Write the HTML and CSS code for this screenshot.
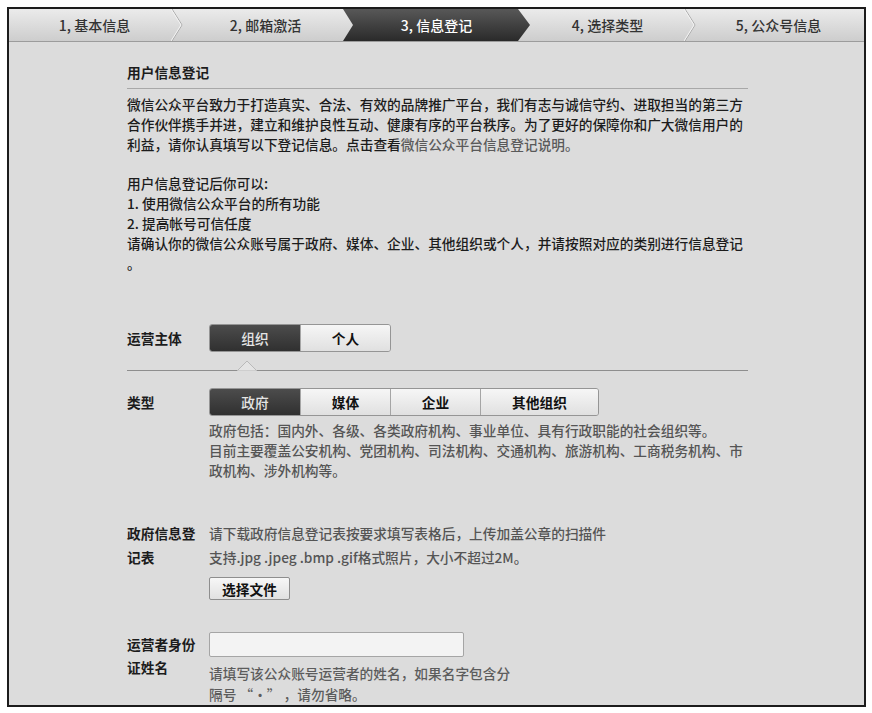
FILE: index.html
```html
<!DOCTYPE html>
<html lang="zh-CN">
<head>
  <meta charset="UTF-8" />
  <title>用户信息登记</title>
  <link rel="stylesheet" href="styles.css">
</head>
<body>
  <div class="frame">
    <ol class="steps">
      <li class="step sep">1, 基本信息
        <svg class="chev" width="12" height="32" viewBox="0 0 12 32"><polyline points="1,0 11,16 1,32" fill="none" stroke="#a9a9a9"/><polyline points="0,0 10,16 0,32" fill="none" stroke="#f4f4f4"/></svg>
      </li>
      <li class="step">2, 邮箱激活</li>
      <li class="step active"><span>3, 信息登记</span></li>
      <li class="step sep">4, 选择类型
        <svg class="chev" width="12" height="32" viewBox="0 0 12 32"><polyline points="1,0 11,16 1,32" fill="none" stroke="#a9a9a9"/><polyline points="0,0 10,16 0,32" fill="none" stroke="#f4f4f4"/></svg>
      </li>
      <li class="step">5, 公众号信息</li>
    </ol>

    <div class="main">
      <h3 class="title">用户信息登记</h3>
      <p class="intro">微信公众平台致力于打造真实、合法、有效的品牌推广平台，我们有志与诚信守约、进取担当的第三方合作伙伴携手并进，建立和维护良性互动、健康有序的平台秩序。为了更好的保障你和广大微信用户的利益，请你认真填写以下登记信息。点击查看<a href="#">微信公众平台信息登记说明。</a></p>
      <p class="intro intro-2">用户信息登记后你可以:<br>1. 使用微信公众平台的所有功能<br>2. 提高帐号可信任度<br>请确认你的微信公众账号属于政府、媒体、企业、其他组织或个人，并请按照对应的类别进行信息登记<br>。</p>

      <div class="row row-subject">
        <div class="label">运营主体</div>
        <div class="seg">
          <button class="on">组织</button>
          <button>个人</button>
        </div>
      </div>

      <div class="divider">
        <svg class="caret" width="20" height="11" viewBox="0 0 20 11"><polygon points="0,11 10,1 20,11" fill="#e4e4e4" stroke="#b9b9b9"/></svg>
      </div>

      <div class="row row-type">
        <div class="label">类型</div>
        <div class="field">
          <div class="seg">
            <button class="on">政府</button>
            <button>媒体</button>
            <button>企业</button>
            <button class="wide">其他组织</button>
          </div>
          <p class="desc">政府包括：国内外、各级、各类政府机构、事业单位、具有行政职能的社会组织等。<br>目前主要覆盖公安机构、党团机构、司法机构、交通机构、旅游机构、工商税务机构、市政机构、涉外机构等。</p>
        </div>
      </div>

      <div class="row row-file">
        <div class="label">政府信息登记表</div>
        <div class="field">
          <p class="tip">请下载政府信息登记表按要求填写表格后，上传加盖公章的扫描件<br>支持.jpg .jpeg .bmp .gif格式照片，大小不超过2M。</p>
          <button class="file-btn">选择文件</button>
        </div>
      </div>

      <div class="row row-name">
        <div class="label">运营者身份证姓名</div>
        <div class="field">
          <input class="text-input" type="text">
          <p class="hint">请填写该公众账号运营者的姓名，如果名字包含分隔号 “·” ，请勿省略。</p>
        </div>
      </div>
    </div>
  </div>
</body>
</html>
```

FILE: styles.css
```css
body {
  margin: 0;
  background: #fff;
  font-family: "Noto Sans CJK SC", sans-serif;
  font-size: 13.7px;
  font-weight: 500;
  color: #1c1c1c;
}

.frame {
  margin: 7px 6px 0 7px;
  height: 696px;
  border: 2px solid #1c1c1c;
  background: #dcdcdc;
  overflow: hidden;
}

/* step bar */
.steps {
  display: flex;
  margin: 0;
  padding: 0;
  list-style: none;
  height: 32px;
  border-bottom: 1px solid #9c9c9c;
  background: linear-gradient(#ebebeb, #cdcdcd);
}

.step {
  flex: 1;
  position: relative;
  text-align: center;
  line-height: 32px;
  font-size: 14px;
  color: #333;
}

.step .chev {
  position: absolute;
  top: 0;
  right: -3px;
}

.step.active {
  z-index: 0;
  color: #fff;
}

.step.active::before {
  content: "";
  position: absolute;
  top: 0;
  bottom: 0;
  left: -8px;
  right: -8px;
  z-index: -1;
  background: linear-gradient(#585858, #2a2a2a);
  clip-path: polygon(0 0, calc(100% - 12px) 0, 100% 50%, calc(100% - 12px) 100%, 0 100%, 10px 50%);
}

/* content */
.main {
  width: 621px;
  padding: 20px 0 0 118px;
}

.title {
  margin: 0;
  font-size: 13.7px;
  font-weight: bold;
  line-height: 20px;
  padding-bottom: 6px;
  border-bottom: 1px solid #a8a8a8;
}

.intro {
  margin: 5px 0 0;
  line-height: 20px;
}

.intro-2 {
  margin-top: 19px;
}

.intro a {
  color: #5a5a5a;
  text-decoration: none;
}

.row {
  display: flex;
}

.label {
  width: 76px;
  margin-right: 6px;
  font-weight: bold;
  flex-shrink: 0;
}

.field {
  width: 539px;
}

.row-subject {
  margin-top: 51px;
}

.row-subject .label,
.row-type .label {
  line-height: 28px;
}

.seg {
  display: inline-flex;
  border: 1px solid #959595;
  border-radius: 3px;
  overflow: hidden;
}

.seg button {
  width: 90px;
  height: 26px;
  padding: 0;
  border: none;
  border-left: 1px solid #a5a5a5;
  background: linear-gradient(#f6f6f6, #e0e0e0);
  font-family: inherit;
  font-size: 13.7px;
  font-weight: bold;
  color: #111;
}

.seg button:first-child {
  border-left: none;
}

.seg button.on {
  background: linear-gradient(#4c4c4c, #303030);
  color: #e4e4e4;
  font-weight: 500;
}

.seg button.wide {
  width: 118px;
}

.divider {
  position: relative;
  margin-top: 18px;
  border-top: 1px solid #8e8e8e;
}

.divider .caret {
  position: absolute;
  left: 110px;
  top: -11px;
}

.row-type {
  margin-top: 17px;
}

.desc {
  margin: 4px 0 0;
  line-height: 20px;
  color: #555;
}

.row-file {
  margin-top: 41px;
}

.row-file .label {
  line-height: 24px;
}

.tip {
  margin: 0;
  line-height: 24px;
  color: #555;
}

.file-btn {
  margin-top: 8px;
  width: 81px;
  height: 23px;
  padding: 0;
  border: 1px solid #8e8e8e;
  border-radius: 2px;
  background: linear-gradient(#f7f7f7, #e1e1e1);
  font-family: inherit;
  font-size: 13.7px;
  font-weight: bold;
  color: #111;
}

.row-name {
  margin-top: 32px;
}

.row-name .label {
  padding-top: 1px;
  line-height: 23px;
}

.text-input {
  display: block;
  box-sizing: border-box;
  width: 255px;
  height: 25px;
  margin: 0;
  border: 1px solid #a5a5a5;
  border-radius: 2px;
  background: #f3f3f3;
}

.hint {
  width: 310px;
  margin: 6px 0 0;
  line-height: 21px;
  color: #5c5c5c;
}
```
